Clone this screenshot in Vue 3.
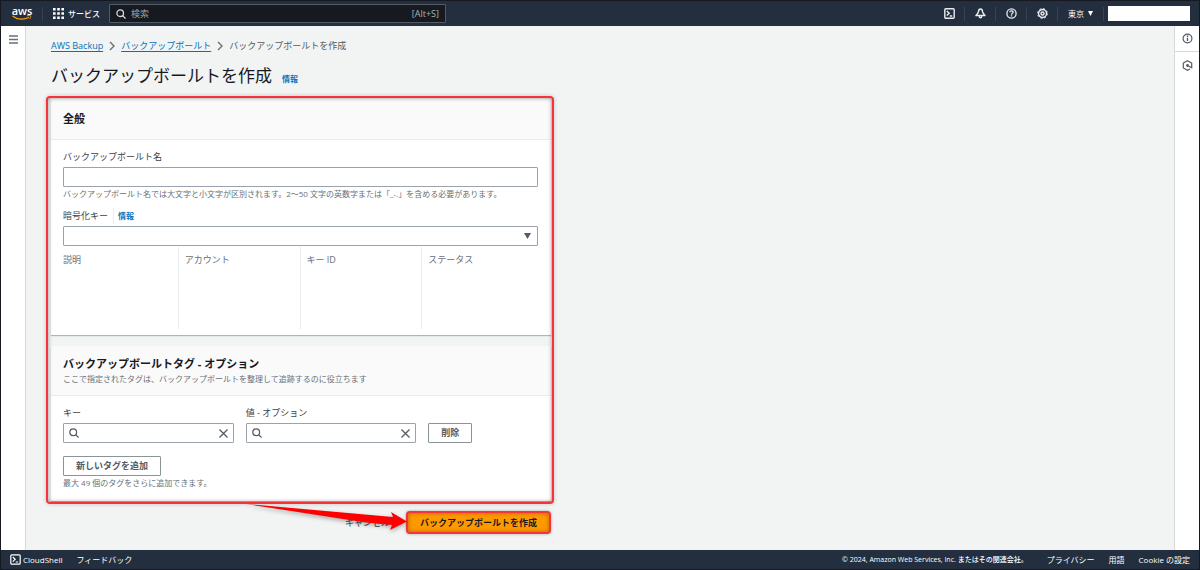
<script setup>
import { ref } from 'vue'

const search = ref('')
const vaultName = ref('')
const encryptionKey = ref('')
const tagKey = ref('')
const tagValue = ref('')
const keyDetails = ['説明', 'アカウント', 'キー ID', 'ステータス']
</script>

<template>
  <div class="console">
    <header class="topbar">
      <a class="logo" href="#" aria-label="aws">
        <span class="logo-text">aws</span>
        <svg class="smile" width="20" height="6" viewBox="0 0 20 6" aria-hidden="true">
          <path d="M.5 1C5 4.8 12.500 5 17 2.200" fill="none" stroke="#f90" stroke-width="1.300" />
          <path d="M15 .8c1.500-.5 3-.5 3.600 0 .3.900-.2 2.400-1.100 3.400" fill="none" stroke="#f90" stroke-width="1" />
        </svg>
      </a>
      <button class="services" type="button">
        <svg width="11" height="11" viewBox="0 0 11 11" fill="#fff" aria-hidden="true">
          <path d="M0 0h2.600v2.600H0zM4.200 0h2.600v2.600H4.200zM8.400 0H11v2.600H8.400zM0 4.200h2.600v2.600H0zM4.200 4.200h2.600v2.600H4.200zM8.400 4.200H11v2.600H8.400zM0 8.400h2.600V11H0zM4.200 8.400h2.600V11H4.200zM8.400 8.400H11V11H8.400z" />
        </svg>
        <span>サービス</span>
      </button>
      <div class="global-search">
        <svg width="10" height="10" viewBox="0 0 10 10" fill="none" stroke="#d5dbdb" stroke-width="1.300" aria-hidden="true">
          <circle cx="4.200" cy="4.200" r="3.300" /><path d="M6.600 6.600 9.500 9.500" />
        </svg>
        <input v-model="search" type="text" placeholder="検索" aria-label="検索" />
        <span class="shortcut">[Alt+S]</span>
      </div>
      <nav class="tools">
        <button type="button" aria-label="CloudShell">
          <svg width="11" height="11" viewBox="0 0 11 11" fill="none" stroke="#e9ebed" stroke-width="1.400">
            <rect x=".8" y=".8" width="9.400" height="9.400" rx="1" /><path d="M2.800 3 5.200 5.300 2.800 7.600M5.800 8h2.400" />
          </svg>
        </button>
        <button type="button" aria-label="通知">
          <svg width="11" height="11" viewBox="0 0 11 11" fill="none" stroke="#e9ebed" stroke-width="1.500" stroke-linejoin="round">
            <path d="M5.500 1C4.200 1 3.600 2.200 3.500 3.500 3.300 5.300 2 6 1 7.600h9C9 6 7.700 5.300 7.500 3.500 7.400 2.200 6.800 1 5.500 1z" /><path d="M4.200 8.200c.3 2.200 2.300 2.200 2.600 0" />
          </svg>
        </button>
        <button type="button" aria-label="ヘルプ">
          <svg width="11" height="11" viewBox="0 0 11 11" fill="none" stroke="#e9ebed" stroke-width="1.300">
            <circle cx="5.500" cy="5.500" r="4.600" /><path d="M3.900 4.300c0-2 3.200-2 3.200-.1 0 1.200-1.600 1.100-1.600 2.500M5.500 7.300v1.200" />
          </svg>
        </button>
        <button type="button" aria-label="設定">
          <svg width="11" height="11" viewBox="0 0 11 11" fill="none" stroke="#e9ebed">
            <circle cx="5.500" cy="5.500" r="4" stroke-width="1.400" /><circle cx="5.500" cy="5.500" r="4.900" stroke-width="1" stroke-dasharray="1.900 1.948" /><circle cx="5.500" cy="5.500" r="1.500" stroke-width="1.400" />
          </svg>
        </button>
        <button class="region" type="button">
          <span>東京</span>
          <svg width="5" height="5" viewBox="0 0 5 5" aria-hidden="true"><path d="M0 0h5L2.500 5z" fill="#fff" /></svg>
        </button>
        <button class="account" type="button" aria-label="アカウント"></button>
      </nav>
    </header>

    <div class="middle">
      <aside class="rail left">
        <button type="button" aria-label="メニュー">
          <svg width="9" height="9" viewBox="0 0 9 9" stroke="#687078" stroke-width="1.500"><path d="M0 1h9M0 4.500h9M0 8h9" /></svg>
        </button>
      </aside>

      <main class="content">
        <nav class="breadcrumb" aria-label="パンくず">
          <a href="#">AWS Backup</a>
          <svg width="6" height="10" viewBox="0 0 6 10" fill="none" stroke="#687078" stroke-width="1.400"><path d="M1 1l4 4-4 4" /></svg>
          <a href="#">バックアップボールト</a>
          <svg width="6" height="10" viewBox="0 0 6 10" fill="none" stroke="#687078" stroke-width="1.400"><path d="M1 1l4 4-4 4" /></svg>
          <span>バックアップボールトを作成</span>
        </nav>
        <div class="page-title">
          <h1>バックアップボールトを作成</h1>
          <a class="info" href="#">情報</a>
        </div>

        <form class="form" @submit.prevent>
          <div class="panels">
            <section class="card">
              <div class="card-head"><h2>全般</h2></div>
              <div class="card-body general">
                <label class="label" for="vault-name">バックアップボールト名</label>
                <input id="vault-name" v-model="vaultName" class="control" type="text" />
                <p class="hint">バックアップボールト名では大文字と小文字が区別されます。2〜50 文字の英数字または「_-.」を含める必要があります。</p>
                <div class="label-row">
                  <label class="label" for="encryption-key">暗号化キー</label>
                  <a class="info divided" href="#">情報</a>
                </div>
                <div class="select">
                  <select id="encryption-key" v-model="encryptionKey" class="control"><option value=""></option></select>
                  <svg width="7" height="6" viewBox="0 0 7 6" aria-hidden="true"><path d="M0 0h7L3.500 6z" fill="#545b64" /></svg>
                </div>
                <div class="details">
                  <div v-for="item in keyDetails" :key="item" class="detail">{{ item }}</div>
                </div>
              </div>
            </section>

            <section class="card">
              <div class="card-head tags-head">
                <h2>バックアップボールトタグ - オプション</h2>
                <p class="hint">ここで指定されたタグは、バックアップボールトを整理して追跡するのに役立ちます</p>
              </div>
              <div class="card-body tags">
                <div class="tag-row">
                  <div class="tag-field">
                    <label class="label" for="tag-key">キー</label>
                    <div class="control search-box">
                      <svg width="10" height="10" viewBox="0 0 10 10" fill="none" stroke="#545b64" stroke-width="1.200"><circle cx="4.200" cy="4.200" r="3.400" /><path d="M6.600 6.600 9.500 9.500" /></svg>
                      <input id="tag-key" v-model="tagKey" type="text" />
                      <button type="button" aria-label="キーをクリア" @click="tagKey = ''">
                        <svg width="9" height="9" viewBox="0 0 9 9" stroke="#545b64" stroke-width="1.300"><path d="M.5.5l8 8M8.500.5l-8 8" /></svg>
                      </button>
                    </div>
                  </div>
                  <div class="tag-field">
                    <label class="label" for="tag-value">値 - オプション</label>
                    <div class="control search-box">
                      <svg width="10" height="10" viewBox="0 0 10 10" fill="none" stroke="#545b64" stroke-width="1.200"><circle cx="4.200" cy="4.200" r="3.400" /><path d="M6.600 6.600 9.500 9.500" /></svg>
                      <input id="tag-value" v-model="tagValue" type="text" />
                      <button type="button" aria-label="値をクリア" @click="tagValue = ''">
                        <svg width="9" height="9" viewBox="0 0 9 9" stroke="#545b64" stroke-width="1.300"><path d="M.5.5l8 8M8.500.5l-8 8" /></svg>
                      </button>
                    </div>
                  </div>
                  <div class="tag-action"><button class="button" type="button">削除</button></div>
                </div>
                <button class="button add" type="button">新しいタグを追加</button>
                <p class="hint">最大 49 個のタグをさらに追加できます。</p>
              </div>
            </section>
            <div class="highlight"></div>
          </div>

          <div class="actions">
            <button class="cancel" type="button">キャンセル</button>
            <button class="create" type="submit">バックアップボールトを作成</button>
            <svg class="arrow" width="162" height="28" viewBox="0 0 162 28" aria-hidden="true">
              <path d="M0 0 147 13 145 8 161 17.500 144 26 146 21 120 18.500Z" fill="#f00" />
            </svg>
          </div>
        </form>
      </main>

      <aside class="rail right">
        <button type="button" aria-label="情報パネル">
          <svg width="11" height="11" viewBox="0 0 11 11" fill="none" stroke="#545b64" stroke-width="1.200"><circle cx="5.500" cy="5.500" r="4.400" /><path d="M5.500 4.800v3.200M5.500 2.600v1.300" stroke-width="1.400" /></svg>
        </button>
        <button type="button" aria-label="チュートリアル">
          <svg width="11" height="11" viewBox="0 0 11 11" fill="none" stroke="#545b64" stroke-width="1.200"><path d="M8 9 5.500 10.300 1.300 7.900V3.100L5.500.7l4.200 2.400v4.600L5.500 5.500" /><circle cx="5.500" cy="5.500" r=".8" /></svg>
        </button>
      </aside>
    </div>

    <footer class="footer">
      <button type="button">
        <svg width="11" height="11" viewBox="0 0 11 11" fill="none" stroke="#fff" stroke-width="1.200"><rect x=".8" y=".8" width="9.400" height="9.400" rx="1" /><path d="M2.800 3 5.200 5.300 2.800 7.600M5.800 8h2.400" /></svg>
        <span>CloudShell</span>
      </button>
      <a href="#">フィードバック</a>
      <span class="copyright">© 2024, Amazon Web Services, Inc. またはその関連会社。</span>
      <a href="#">プライバシー</a>
      <a href="#">用語</a>
      <a href="#">Cookie の設定</a>
    </footer>
  </div>
</template>

<style>
body {
  margin: 0;
}
</style>

<style scoped>
.console,
.console * {
  box-sizing: border-box;
}
.console {
  display: flex;
  flex-direction: column;
  min-height: 100vh;
  border: 1px solid #16191f;
  background: #f2f3f3;
  color: #16191f;
  font-family: "Open Sans", "Noto Sans CJK JP", sans-serif;
  font-size: 9px;
  line-height: 16px;
}
button,
input,
select {
  margin: 0;
  padding: 0;
  border: 0;
  background: none;
  color: inherit;
  font: inherit;
}
input {
  outline: 0;
}
a {
  color: #0073bb;
}
h1,
h2,
p {
  margin: 0;
}
svg {
  display: block;
  flex: none;
}
.topbar {
  display: flex;
  align-items: center;
  height: 25px;
  padding: 0 9px 0 11px;
  background: #232f3e;
  color: #fff;
}
.logo {
  display: flex;
  flex-direction: column;
  align-items: center;
  width: 20px;
  color: #fff;
  text-decoration: none;
}
.logo-text {
  font-size: 11px;
  font-weight: 600;
  line-height: 9px;
}
.services {
  display: flex;
  align-items: center;
  gap: 4px;
  height: 14px;
  margin-left: 10px;
  padding: 0 9px 0 10px;
  border-left: 1px solid #38434f;
  font-size: 8px;
  font-weight: 500;
}
.global-search {
  display: flex;
  align-items: center;
  gap: 5px;
  flex: 0 1 337px;
  height: 19px;
  padding: 0 6px;
  border: 1px solid #545b64;
  border-radius: 1px;
  background: #16191f;
}
.global-search input {
  flex: 1;
  min-width: 0;
}
.global-search input::placeholder {
  color: #95a5a6;
  opacity: 1;
}
.shortcut {
  color: #aab7b8;
}
.tools {
  display: flex;
  align-items: center;
  margin-left: auto;
}
.tools button {
  display: flex;
  align-items: center;
  justify-content: center;
  width: 31px;
  height: 14px;
  border-right: 1px solid #38434f;
}
.tools .region {
  gap: 4px;
  width: 46px;
  font-size: 8px;
}
.tools .account {
  width: 82px;
  height: 15px;
  margin-left: 4px;
  border: 0;
  background: #fff;
}
.middle {
  display: flex;
  flex: 1;
}
.rail {
  width: 25px;
  flex: none;
  background: #fff;
}
.rail button {
  display: flex;
  align-items: center;
  justify-content: center;
  width: 100%;
  height: 26px;
}
.left {
  border-right: 1px solid #d5dbdb;
}
.right {
  border-left: 1px solid #d5dbdb;
}
.right button:first-child {
  border-bottom: 1px solid #d5dbdb;
}
.content {
  flex: 1;
  min-width: 0;
  padding: 12px 25px 15px;
}
.breadcrumb {
  display: flex;
  align-items: center;
  gap: 6px;
  color: #545b64;
}
.breadcrumb a {
  text-underline-offset: 2px;
}
.page-title {
  display: flex;
  align-items: baseline;
  gap: 10px;
  margin: 10px 0 11px;
}
h1 {
  font-size: 17px;
  font-weight: 400;
  line-height: 24px;
}
.info {
  font-size: 8px;
  font-weight: 700;
  text-decoration: none;
}
.form {
  max-width: 500px;
}
.panels {
  display: grid;
  gap: 11px;
  position: relative;
}
.highlight {
  position: absolute;
  inset: -3px -3px -3px -5px;
  border: 2px solid #f5333a;
  border-radius: 4px;
  box-shadow: 0 0 4px rgba(0, 0, 0, 0.2), inset 0 0 4px rgba(0, 0, 0, 0.4);
  pointer-events: none;
}
.card {
  background: #fff;
  box-shadow: 0 1px 1px #aab7b8;
}
.card-head {
  padding: 12px;
  border-bottom: 1px solid #eaeded;
  background: #fafafa;
}
.tags-head {
  padding: 10px 12px;
}
h2 {
  font-size: 11px;
  font-weight: 700;
  line-height: 16px;
}
.card-body {
  padding: 9px 13px 12px 12px;
}
.general {
  padding-bottom: 6px;
}
.label {
  display: block;
  margin-bottom: 2px;
  color: #3b424a;
}
.label-row {
  display: flex;
  gap: 5px;
  margin-top: 8px;
}
.divided {
  margin-bottom: 2px;
  padding-left: 4px;
  border-left: 1px solid #eaeded;
}
.control {
  display: block;
  width: 100%;
  height: 20px;
  padding: 0 5px;
  border: 1px solid #9ba2ab;
  border-radius: 1px;
  background: #fff;
}
.hint {
  margin-top: 1px;
  color: #687078;
  font-size: 8px;
  line-height: 12px;
}
.select {
  display: grid;
  align-items: center;
}
.select > * {
  grid-area: 1 / 1;
}
.select select {
  appearance: none;
}
.select svg {
  justify-self: end;
  margin-right: 7px;
  pointer-events: none;
}
.details {
  display: grid;
  grid-template-columns: repeat(4, 1fr);
  gap: 12px;
  margin-top: 1px;
}
.detail {
  min-height: 82px;
  padding-top: 5px;
  color: #687078;
}
.detail + .detail {
  margin-left: -7px;
  padding-left: 6px;
  border-left: 1px solid #eaeded;
}
.tag-row {
  display: grid;
  grid-template-columns: repeat(8, 1fr);
  gap: 12px;
}
.tag-field {
  grid-column: span 3;
}
.tag-action {
  grid-column: span 2;
  align-self: end;
}
.search-box {
  display: flex;
  align-items: center;
}
.search-box input {
  flex: 1;
  min-width: 0;
  padding: 0 4px;
}
.button {
  display: block;
  height: 20px;
  padding: 0 12px;
  border: 1px solid #879596;
  border-radius: 1px;
  background: #fff;
  color: #545b64;
  font-weight: 700;
}
.add {
  margin-top: 13px;
}
.actions {
  display: flex;
  justify-content: flex-end;
  align-items: center;
  gap: 16px;
  position: relative;
  margin-top: 10px;
}
.cancel {
  color: #545b64;
  font-weight: 500;
}
.create {
  height: 23px;
  padding: 0 12px;
  border: 2px solid #f5333a;
  border-radius: 4px;
  background: #f90;
  box-shadow: 0 0 3px rgba(0, 0, 0, 0.35), inset 0 0 4px rgba(120, 60, 0, 0.6);
  font-weight: 700;
}
.arrow {
  position: absolute;
  right: 143px;
  bottom: 2px;
  filter: drop-shadow(0 2px 2px rgba(0, 0, 0, 0.3));
  pointer-events: none;
}
.footer {
  display: flex;
  align-items: center;
  gap: 14px;
  height: 19px;
  padding: 0 9px;
  background: #232f3e;
  color: #fff;
  font-size: 8px;
}
.footer a {
  color: #fff;
  text-decoration: none;
}
.footer button {
  display: flex;
  align-items: center;
  gap: 2px;
}
.copyright {
  margin-left: auto;
  margin-right: 5px;
  font-size: 7px;
  font-weight: 500;
}
</style>
